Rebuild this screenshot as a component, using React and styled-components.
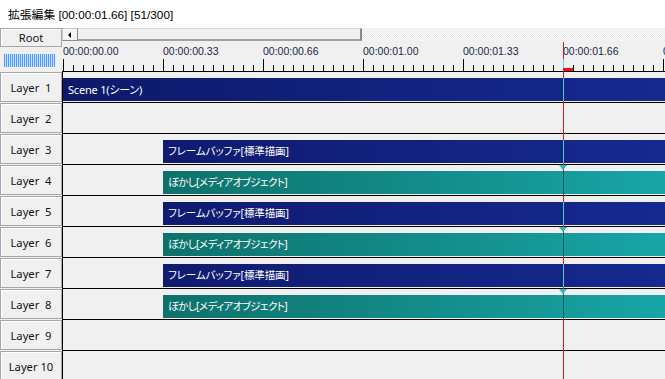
import React from 'react';
import styled, { createGlobalStyle } from 'styled-components';

const PLAYHEAD = 500;

const layers = [
  { id: 1, clip: { start: 0, kind: 'scene', label: 'Scene 1(シーン)' } },
  { id: 2 },
  { id: 3, clip: { start: 100, kind: 'blue', label: 'フレームバッファ[標準描画]' } },
  { id: 4, clip: { start: 100, kind: 'teal', label: 'ぼかし[メディアオブジェクト]' } },
  { id: 5, clip: { start: 100, kind: 'blue', label: 'フレームバッファ[標準描画]' } },
  { id: 6, clip: { start: 100, kind: 'teal', label: 'ぼかし[メディアオブジェクト]' } },
  { id: 7, clip: { start: 100, kind: 'blue', label: 'フレームバッファ[標準描画]' } },
  { id: 8, clip: { start: 100, kind: 'teal', label: 'ぼかし[メディアオブジェクト]' } },
  { id: 9 },
  { id: 10 },
];

const labels = ['00:00:00.00', '00:00:00.33', '00:00:00.66', '00:00:01.00', '00:00:01.33', '00:00:01.66', '00:00:02.00'];

const clipColors = {
  scene: { bg: 'linear-gradient(90deg, #0d196a, #15298f)', cue: '#44d4bc', size: '11px', spacing: '-0.2px' },
  blue: { bg: 'linear-gradient(90deg, #0f1b70, #15298f)', cue: '#44d4bc', size: '10.5px', spacing: '-0.1px' },
  teal: { bg: 'linear-gradient(90deg, #0e716b, #18a5a6)', cue: '#0a5a5c', size: '10.5px', spacing: '-0.6px' },
};

const Global = createGlobalStyle`
  html, body { margin: 0; padding: 0; background: #f0f0f0; }
  body {
    width: 665px;
    height: 379px;
    overflow: hidden;
    font-family: "Noto Sans", "Noto Sans CJK JP", sans-serif;
  }
`;

const Window = styled.div`
  width: 665px;
  height: 379px;
  display: flex;
  flex-direction: column;
  background: #f0f0f0;
  overflow: hidden;
`;

const TitleBar = styled.div`
  height: 28px;
  flex: none;
  box-sizing: border-box;
  padding: 0 8px 2px;
  display: flex;
  align-items: center;
  background: #fff;
  color: #000;
  font: 11.8px "Liberation Sans", "Noto Sans CJK JP", sans-serif;
`;

const Editor = styled.div`
  position: relative;
  flex: 1;
  display: flex;
  flex-direction: column;
`;

const HeaderRow = styled.div`
  display: grid;
  grid-template-columns: 62px 1fr;
  height: 44px;
  flex: none;
`;

const HeaderSide = styled.div`
  display: flex;
  flex-direction: column;
  align-items: flex-start;
`;

const PanelButton = styled.div`
  box-sizing: border-box;
  width: 62px;
  height: ${p => p.$h}px;
  display: flex;
  align-items: center;
  justify-content: center;
  background: #f0f0f0;
  border: 1px solid #a6a6a6;
  box-shadow: inset 1px 1px 0 #fff;
  color: #111;
  font-size: 11.2px;
  white-space: pre;
`;

const Meter = styled.div`
  margin: 7px 0 0 4px;
  width: 51px;
  height: 13px;
  background: repeating-linear-gradient(90deg, #4d9bff 0 1px, #cfe2fb 1px 2px);
`;

const HeaderMain = styled.div`
  display: flex;
  flex-direction: column;
  min-width: 0;
`;

const ScrollBar = styled.div`
  height: 13px;
  display: flex;
`;

const ArrowButton = styled.div`
  box-sizing: border-box;
  width: 16px;
  display: flex;
  align-items: center;
  justify-content: center;
  background: #f4f4f4;
  border: 1px solid #c8c8c8;
  border-right-color: #8a8a8a;
  border-bottom-color: #8a8a8a;

  &::before {
    content: '';
    border-right: 3px solid #000;
    border-top: 3px solid transparent;
    border-bottom: 3px solid transparent;
    margin-right: 2px;
  }
`;

const Thumb = styled.div`
  box-sizing: border-box;
  width: 284px;
  background: #f0f0f0;
  border-top: 1px solid #dcdcdc;
  border-bottom: 2px solid #a0a0a0;
  border-right: 2px solid #8a8a8a;
`;

const ScrollTrack = styled.div`
  flex: 1;
  background: repeating-conic-gradient(#fbfbfb 0 25%, #e9e9e9 0 50%) 0 0 / 2px 2px;
`;

const Ruler = styled.div`
  position: relative;
  height: 31px;
  box-sizing: border-box;
  border-bottom: 1px solid #000;
  overflow: hidden;
`;

const TickSvg = styled.svg`
  position: absolute;
  left: 0;
  bottom: 0;
  display: block;
`;

const TimeLabel = styled.span.attrs(p => ({ style: { left: `${p.$x}px` } }))`
  position: absolute;
  top: 4px;
  font: 10.5px/12px "Liberation Sans", sans-serif;
  color: #1c2444;
  white-space: nowrap;
`;

const RulerCue = styled.div`
  position: absolute;
  left: ${PLAYHEAD + 1}px;
  top: 18px;
  width: 1px;
  height: 12px;
  background: #3ee0ea;
  z-index: 2;
`;

const RulerMark = styled.div`
  position: absolute;
  left: ${PLAYHEAD + 1}px;
  top: 27px;
  width: 10px;
  height: 3px;
  background: #e51515;
  z-index: 2;
`;

const LayerRow = styled.div`
  display: flex;
  height: 31px;
  flex: none;
`;

const LayerCell = styled.div`
  width: 62px;
  flex: none;
`;

const Lane = styled.div`
  position: relative;
  flex: 1;
  box-sizing: border-box;
  display: flex;
  align-items: flex-start;
  padding-top: 6px;
  border-left: 1px solid #000;
  border-bottom: 1px solid #000;
  background: #f0f0f0;
  min-width: 0;
`;

const Clip = styled.div`
  position: relative;
  flex: 1;
  height: 23px;
  margin-left: ${p => p.$start}px;
  padding-left: 5px;
  background: ${p => clipColors[p.$kind].bg};
  color: #fff;
  font-family: "Noto Sans", "Noto Sans CJK JP", sans-serif;
  font-size: ${p => clipColors[p.$kind].size};
  line-height: 23px;
  font-feature-settings: "palt" 1;
  letter-spacing: ${p => clipColors[p.$kind].spacing};
  white-space: nowrap;
  overflow: hidden;
`;

const ClipCue = styled.div`
  position: absolute;
  top: 0;
  bottom: 0;
  left: ${p => PLAYHEAD - p.$start}px;
  width: 1px;
  background: ${p => clipColors[p.$kind].cue};
  z-index: 2;
`;

const CueTriangle = styled.div`
  position: absolute;
  top: 0;
  left: ${PLAYHEAD - 4}px;
  width: 0;
  height: 0;
  border-top: 5px solid #1fc0c8;
  border-left: 4.5px solid transparent;
  border-right: 4.5px solid transparent;
  z-index: 2;
`;

const Playhead = styled.div`
  position: absolute;
  left: ${62 + PLAYHEAD + 1}px;
  top: 14px;
  bottom: 0;
  width: 1px;
  background: #e51515;
  z-index: 1;
`;

function Ticks() {
  const lines = [];
  for (let i = 0; i <= 61; i++) {
    const x = 1.5 + i * 10;
    const major = i % 10 === 0;
    lines.push(<line key={i} x1={x} x2={x} y1={major ? 18 : 24} y2={30} stroke="#000" strokeWidth="1" />);
  }
  return (
    <TickSvg width="603" height="30" viewBox="0 0 603 30">
      {lines}
    </TickSvg>
  );
}

export default function App() {
  return (
    <Window>
      <Global />
      <TitleBar>拡張編集 [00:00:01.66] [51/300]</TitleBar>
      <Editor>
        <HeaderRow>
          <HeaderSide>
            <PanelButton $h={19}>Root</PanelButton>
            <Meter />
          </HeaderSide>
          <HeaderMain>
            <ScrollBar>
              <ArrowButton />
              <Thumb />
              <ScrollTrack />
            </ScrollBar>
            <Ruler>
              <Ticks />
              {labels.map((t, i) => (
                <TimeLabel key={t} $x={1 + i * 100}>{t}</TimeLabel>
              ))}
              <RulerCue />
              <RulerMark />
            </Ruler>
          </HeaderMain>
        </HeaderRow>
        {layers.map(l => (
          <LayerRow key={l.id}>
            <LayerCell>
              <PanelButton $h={30}>{l.id < 10 ? `Layer  ${l.id}` : `Layer ${l.id}`}</PanelButton>
            </LayerCell>
            <Lane>
              {l.clip && (
                <Clip $start={l.clip.start} $kind={l.clip.kind}>
                  {l.clip.label}
                  <ClipCue $start={l.clip.start} $kind={l.clip.kind} />
                </Clip>
              )}
              {l.clip && l.clip.kind === 'teal' && <CueTriangle />}
            </Lane>
          </LayerRow>
        ))}
        <Playhead />
      </Editor>
    </Window>
  );
}
